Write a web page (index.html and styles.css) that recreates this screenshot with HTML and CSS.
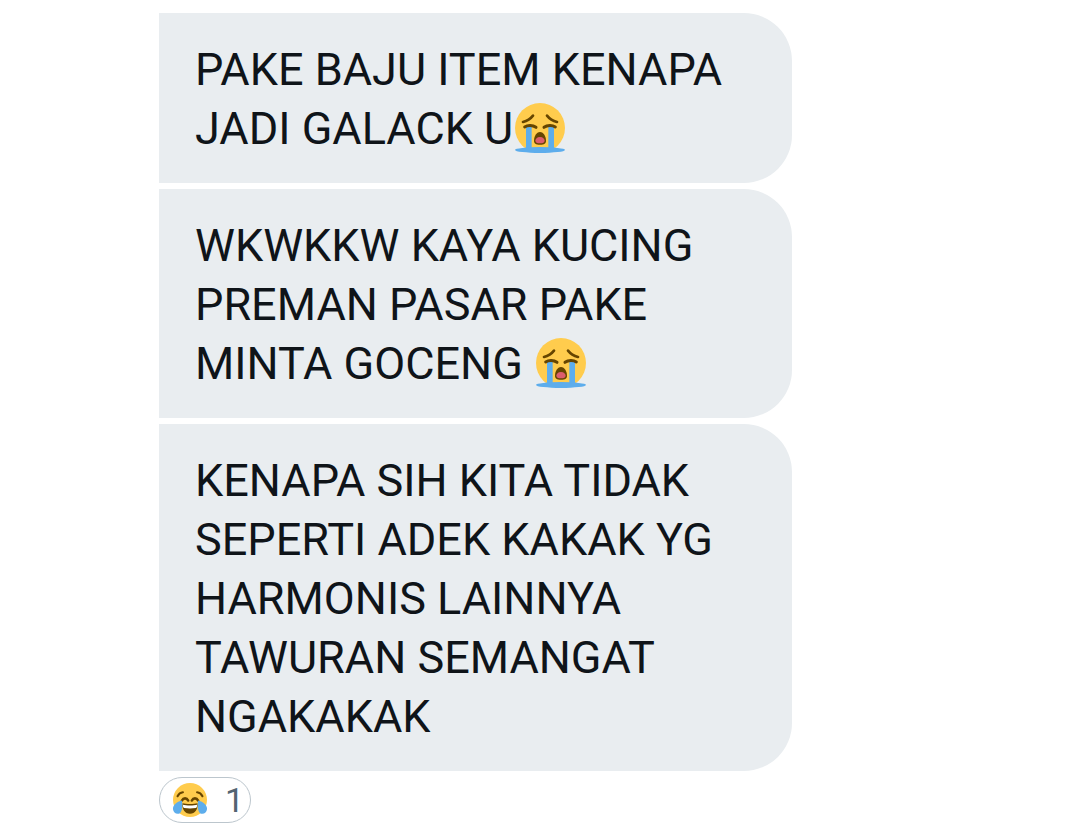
FILE: index.html
```
<!DOCTYPE html>
<html lang="id">

<head>
    <meta charset="UTF-8">
    <meta name="viewport" content="width=device-width, initial-scale=1.0">
    <title>Chat</title>
    <link rel="stylesheet" href="styles.css">
</head>

<body>
    <!-- shared emoji shapes -->
    <svg class="sprite" aria-hidden="true">
        <symbol id="sob" viewBox="0 0 150 150">
            <circle cx="75" cy="75" r="75" fill="#ffcc4d" />
            <ellipse cx="75" cy="141" rx="75" ry="9" fill="#5dadec" />
            <path d="M33 70h17v70H33zM100 70h17v70h-17z" fill="#5dadec" />
            <path d="M24 57C36 54 47 47 54 38M126 57C114 54 103 47 96 38" fill="none" stroke="#664500" stroke-width="8" stroke-linecap="round" />
            <path d="M29 72C38 66 53 66 63 73M87 73C97 66 112 66 121 72" fill="none" stroke="#664500" stroke-width="9" stroke-linecap="round" />
            <path d="M75 87C64 87 57 101 57 113C57 121 62 125 75 125C88 125 93 121 93 113C93 101 86 87 75 87z" fill="#664500" />
            <path d="M75 102C66 102 61 108 61 113C61 118 66 121 75 121C84 121 89 118 89 113C89 108 84 102 75 102z" fill="#dd5d6c" />
        </symbol>
        <symbol id="joy" viewBox="0 0 36 36">
            <circle cx="18" cy="18" r="18" fill="#ffcc4d" />
            <path d="M10 21.500C14 22.500 22 22.500 26 21.500C26.500 28 23.500 32.500 18 32.500S9.500 28 10 21.500z" fill="#664500" />
            <path d="M10.500 23C14 24 22 24 25.500 23C25.500 25.500 25 26.300 24 26.500C20 27.200 16 27.200 12 26.500C11 26.300 10.500 25.500 10.500 23z" fill="#fff" />
            <path d="M9.500 18.500C11 15.500 14.500 15.500 16 18.500M20 18.500C21.500 15.500 25 15.500 26.500 18.500" fill="none" stroke="#664500" stroke-width="2.800" stroke-linecap="round" />
            <path d="M4.800 14C6 11.500 8 10 10.500 9.800M31.200 14C30 11.500 28 10 25.500 9.800" fill="none" stroke="#664500" stroke-width="2.200" stroke-linecap="round" />
            <path d="M9.500 18.500C5 19.500 .5 22.500 0 26.500C-.3 30 2 32.500 5 32.500C9.500 32.500 10.500 26 9.500 18.500zM26.500 18.500C31 19.500 35.500 22.500 36 26.500C36.300 30 34 32.500 31 32.500C26.500 32.500 25.500 26 26.500 18.500z" fill="#5dadec" />
        </symbol>
    </svg>

    <main class="chat">
        <p class="bubble">PAKE BAJU ITEM KENAPA JADI GALACK U<svg class="emoji" role="img" aria-label="😭"><use href="#sob" /></svg></p>
        <p class="bubble">WKWKKW KAYA KUCING PREMAN PASAR PAKE MINTA GOCENG <svg class="emoji" role="img" aria-label="😭"><use href="#sob" /></svg></p>
        <p class="bubble">KENAPA SIH KITA TIDAK SEPERTI ADEK KAKAK YG HARMONIS LAINNYA TAWURAN SEMANGAT NGAKAKAK</p>
        <button class="reaction" type="button">
            <svg class="reaction-icon" role="img" aria-label="😂"><use href="#joy" /></svg>
            <span>1</span>
        </button>
    </main>
</body>

</html>
```
FILE: styles.css
```
* {
    margin: 0;
    padding: 0;
    box-sizing: border-box;
}

body {
    background-color: #fff;
    color: #0f1419;
    font-family: Roboto, "Liberation Sans", sans-serif;
}

.sprite {
    display: none;
}

.chat {
    display: flex;
    flex-direction: column;
    align-items: flex-start;
    gap: 6px;
    max-width: 792px;
    padding: 13px 0 11px 159px;
}

.bubble {
    width: 100%;
    padding: 27px 36px 25px;
    border-radius: 0 48px 48px 0;
    background-color: #e9edf0;
    font-size: 45px;
    line-height: 59px;
}

.emoji {
    width: 50px;
    height: 50px;
    margin-left: 2px;
    vertical-align: -9px;
}

.reaction {
    display: flex;
    align-items: center;
    gap: 18px;
    height: 46px;
    padding: 0 6px 0 13px;
    border: 1px solid #bcc6cd;
    border-radius: 23px;
    background-color: #fff;
    color: #536471;
    font-family: inherit;
    font-size: 34px;
    line-height: 44px;
}

.reaction-icon {
    width: 34px;
    height: 34px;
}
```
